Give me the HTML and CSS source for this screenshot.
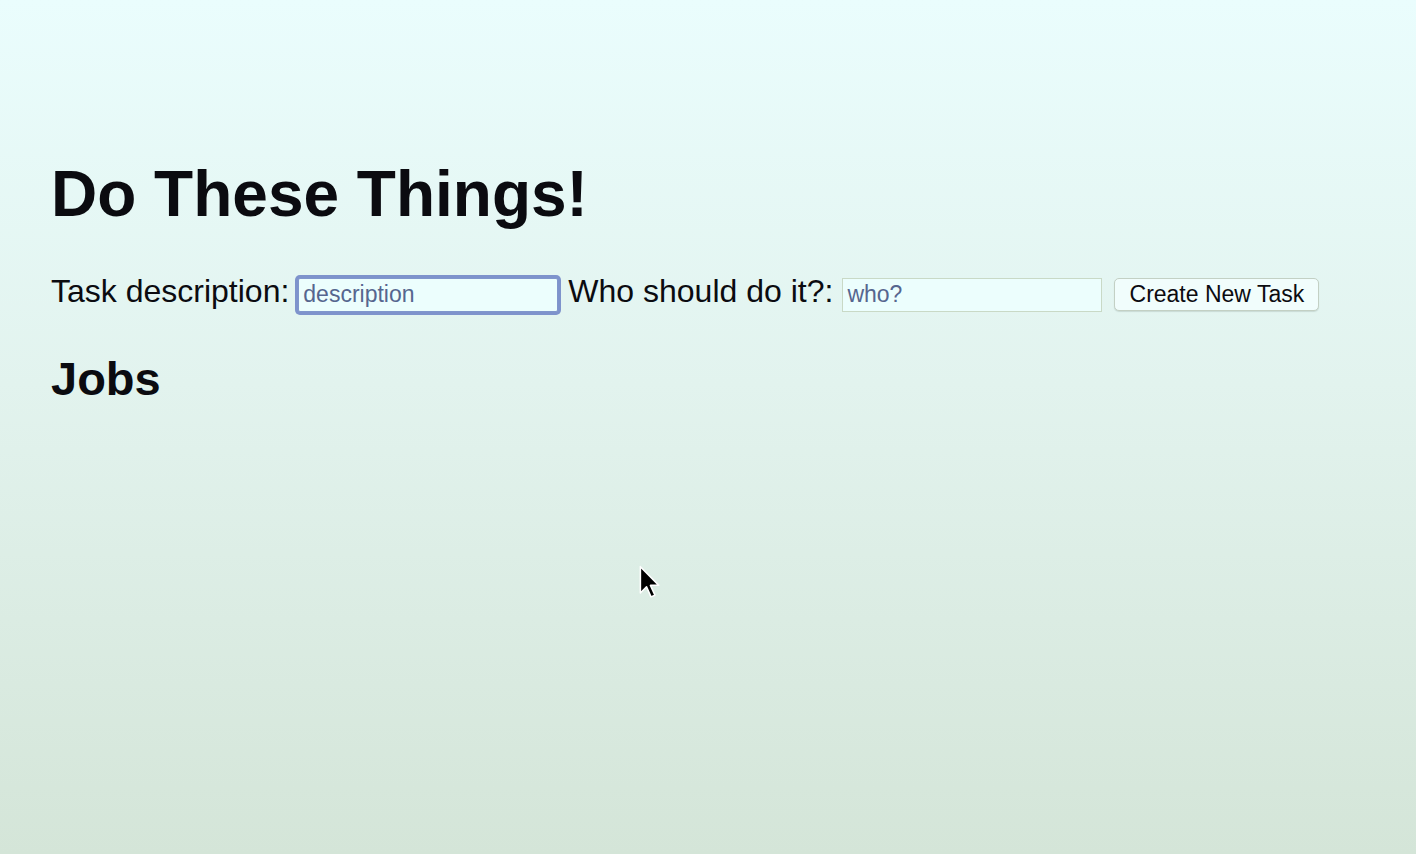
FILE: index.html
```html
<!DOCTYPE html>
<html lang="en">
<head>
<meta charset="utf-8">
<title>Do These Things!</title>
<link rel="stylesheet" href="styles.css">
</head>
<body>
<main class="page">
  <h1 class="title">Do These Things!</h1>
  <form class="task-form">
    <label class="field-label" for="desc">Task description:</label>
    <input class="field field-focus" id="desc" type="text" placeholder="description">
    <label class="field-label" for="who">Who should do it?:</label>
    <input class="field" id="who" type="text" placeholder="who?">
    <button class="create-btn" type="button">Create New Task</button>
  </form>
  <h2 class="jobs">Jobs</h2>
</main>
<svg class="cursor" width="26" height="38" viewBox="0 0 22 34" aria-hidden="true">
  <path d="M1.5 1.5 L1.5 25 L7 19.5 L11 28.5 L14.5 27 L10.5 18.2 L18 18.2 Z" fill="#000" stroke="#fff" stroke-width="1.4" stroke-linejoin="round"/>
</svg>
</body>
</html>
```

FILE: styles.css
```css
html, body {
  margin: 0;
  padding: 0;
  height: 100%;
}

body {
  background: linear-gradient(to bottom, #eafdfd 0%, #e2f3ee 45%, #d4e5d8 100%);
  font-family: "Liberation Sans", Arial, Helvetica, sans-serif;
  color: #0b0b10;
  overflow: hidden;
  position: relative;
}

.page {
  padding: 158px 0 0 51px;
}

.title {
  margin: 0;
  font-size: 64px;
  line-height: 72px;
  font-weight: bold;
}

.task-form {
  margin-top: 41px;
  display: flex;
  align-items: baseline;
  height: 40px;
}

.field-label {
  font-size: 32px;
  line-height: 40px;
}

.field {
  box-sizing: border-box;
  width: 260px;
  height: 34px;
  margin: 0 10px 0 9px;
  padding: 0 4px;
  border: 1px solid #c9d9c6;
  background: #ecfefd;
  font-family: "Liberation Sans", Arial, Helvetica, sans-serif;
  font-size: 23px;
  color: #0b0b10;
  outline: none;
}

.field::placeholder {
  color: #56668f;
}

.field-focus {
  border: 1px solid #8096cc;
  box-shadow: 0 0 0 3px #7e93cc;
  border-radius: 2px;
}

.create-btn {
  box-sizing: border-box;
  height: 33px;
  width: 205px;
  margin-left: 2px;
  padding: 0;
  border: 1px solid #c3d0c4;
  border-radius: 5px;
  background: #f1fdfc;
  font-family: "Liberation Sans", Arial, Helvetica, sans-serif;
  font-size: 23px;
  color: #0b0b10;
  box-shadow: 0 1px 1px rgba(120, 140, 130, 0.25);
}

.jobs {
  margin: 41px 0 0 0;
  font-size: 47px;
  line-height: 54px;
  font-weight: bold;
}

.cursor {
  position: absolute;
  left: 638px;
  top: 565px;
}
```
